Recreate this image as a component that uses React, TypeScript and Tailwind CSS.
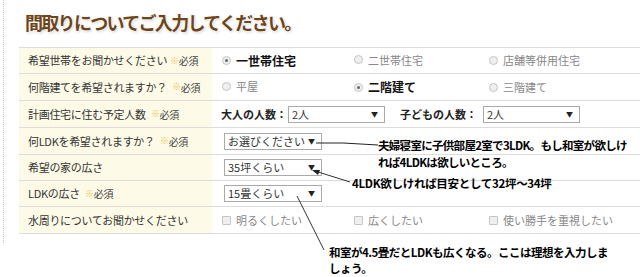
import React from 'react';

const FONT = "font-['Noto_Sans_CJK_JP','Noto_Sans',sans-serif]";

const Required = () => (
  <span className="ml-[3px] inline-flex items-center">
    <span className="text-[9px] text-[#e3c24a]">※</span>
    <span className="text-[10px] text-[#444]">必須</span>
  </span>
);

const Radio = ({ checked, label }: { checked?: boolean; label: string }) => (
  <span className="flex items-center gap-[5px]">
    <span className="flex h-[9px] w-[9px] items-center justify-center rounded-full border border-[#c4c4c4] bg-[#efefef]">
      {checked && <span className="h-[3px] w-[3px] rounded-full bg-[#666]" />}
    </span>
    <span className={checked ? 'text-[12px] font-bold text-[#111]' : 'text-[11px] text-[#888]'}>{label}</span>
  </span>
);

const Check = ({ label }: { label: string }) => (
  <span className="flex items-center gap-[5px]">
    <span className="h-[9px] w-[9px] rounded-[1px] border border-[#c4c4c4] bg-[#efefef]" />
    <span className="text-[11px] text-[#888]">{label}</span>
  </span>
);

const Select = ({ value, w }: { value: string; w: string }) => (
  <div className={`flex h-[17px] items-center justify-between border border-[#aaa] bg-white pl-[3px] pr-[6px] ${w}`}>
    <span className="text-[11px] leading-none text-[#333]">{value}</span>
    <span className="text-[7px] leading-none text-[#222]">▼</span>
  </div>
);

interface Row {
  label: string;
  req?: boolean;
  h: string;
  content: React.ReactNode;
}

const rows: Row[] = [
  {
    label: '希望世帯をお聞かせください',
    req: true,
    h: 'h-[26px]',
    content: (
      <div className="flex pl-[10px]">
        <div className="w-[132px]"><Radio checked label="一世帯住宅" /></div>
        <div className="w-[135px]"><Radio label="二世帯住宅" /></div>
        <Radio label="店舗等併用住宅" />
      </div>
    ),
  },
  {
    label: '何階建てを希望されますか？ ',
    req: true,
    h: 'h-[27px]',
    content: (
      <div className="flex pl-[10px]">
        <div className="w-[132px]"><Radio label="平屋" /></div>
        <div className="w-[135px]"><Radio checked label="二階建て" /></div>
        <Radio label="三階建て" />
      </div>
    ),
  },
  {
    label: '計画住宅に住む予定人数 ',
    req: true,
    h: 'h-[27px]',
    content: (
      <div className="flex items-center pl-[9px]">
        <span className="w-[67px] text-[11px] font-bold text-[#222]">大人の人数：</span>
        <Select value="2人" w="w-[97px]" />
        <span className="ml-[15px] w-[83px] text-[11px] font-bold text-[#222]">子どもの人数：</span>
        <Select value="2人" w="w-[97px]" />
      </div>
    ),
  },
  {
    label: '何LDKを希望されますか？ ',
    req: true,
    h: 'h-[27px]',
    content: <div className="pl-[12px]"><Select value="お選びください" w="w-[98px]" /></div>,
  },
  {
    label: '希望の家の広さ',
    h: 'h-[26px]',
    content: <div className="pl-[12px]"><Select value="35坪くらい" w="w-[98px]" /></div>,
  },
  {
    label: 'LDKの広さ ',
    req: true,
    h: 'h-[26px]',
    content: <div className="pl-[12px]"><Select value="15畳くらい" w="w-[98px]" /></div>,
  },
  {
    label: '水周りについてお聞かせください',
    h: 'h-[27px]',
    content: (
      <div className="flex pl-[10px]">
        <div className="w-[132px]"><Check label="明るくしたい" /></div>
        <div className="w-[135px]"><Check label="広くしたい" /></div>
        <Check label="使い勝手を重視したい" />
      </div>
    ),
  },
];

export default function App() {
  return (
    <div className={`relative h-[277px] w-[640px] overflow-hidden bg-white ${FONT}`}>
      <div className="ml-[3px] h-[243px] border-l border-dotted border-[#c8c8c8] pl-[15px]">
        <div className="h-[47px] pl-[6px] pt-[9px]">
          <h1 className="whitespace-nowrap text-[18px] font-bold leading-[26px] tracking-[-1.7px] text-[#6e4419] [text-shadow:0_0_2px_#fff,0_0_3px_#fff,1px_1px_3px_rgba(0,0,0,0.25)]">
            間取りについてご入力してください。
          </h1>
        </div>
        <div className="border-t border-[#dcdcdc]">
          {rows.map((r) => (
            <div key={r.label} className={`flex border-b border-[#dcdcdc] ${r.h}`}>
              <div className="flex w-[193px] items-center bg-[#fdfbe7] pl-[9px] text-[11px] tracking-[-0.3px] text-[#333]">
                <span className="whitespace-pre">{r.label}</span>
                {r.req && <Required />}
              </div>
              <div className="flex flex-1 items-center">{r.content}</div>
            </div>
          ))}
        </div>
      </div>

      {/* annotations drawn over the form */}
      <svg className="pointer-events-none absolute left-0 top-0" width="640" height="277">
        <polyline points="316,143 343,143 378,145" fill="none" stroke="#222" strokeWidth="1" />
        <line x1="315" y1="171" x2="350" y2="182" stroke="#333" strokeWidth="1" />
        <polygon points="312,170 320,170 318,175" fill="#222" />
        <line x1="297" y1="196" x2="324" y2="250" stroke="#333" strokeWidth="1" />
      </svg>
      <div className="absolute left-[378px] top-[137px] text-[11.5px] font-bold leading-[17px] tracking-[-0.7px] text-black">
        <div className="whitespace-nowrap">夫婦寝室に子供部屋2室で3LDK。もし和室が欲しけ</div>
        <div className="whitespace-nowrap">れば4LDKは欲しいところ。</div>
      </div>
      <div className="absolute left-[352px] top-[175px] whitespace-nowrap text-[11.5px] font-bold leading-[17px] tracking-[-0.3px] text-black">
        4LDK欲しければ目安として32坪〜34坪
      </div>
      <div className="absolute left-[329px] top-[244px] text-[11.5px] font-bold leading-[16px] tracking-[-0.5px] text-black">
        <div className="whitespace-nowrap">和室が4.5畳だとLDKも広くなる。ここは理想を入力しま</div>
        <div className="whitespace-nowrap">しょう。</div>
      </div>
    </div>
  );
}
